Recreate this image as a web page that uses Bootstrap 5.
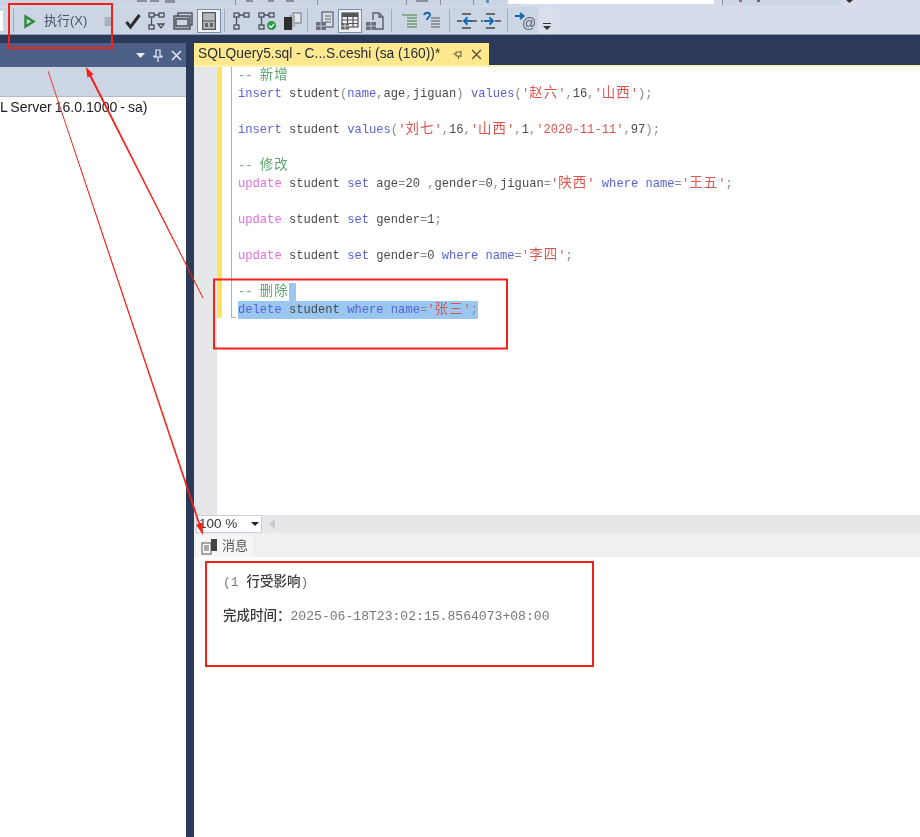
<!DOCTYPE html>
<html lang="zh">
<head>
<meta charset="utf-8">
<title>SSMS</title>
<link href="https://cdn.jsdelivr.net/npm/bootstrap@5.3.0/dist/css/bootstrap.min.css" rel="stylesheet">
<style>
html,body{margin:0;height:837px;overflow:hidden;background:#fff}
.ssms-root{position:relative;width:920px;height:837px;overflow:hidden;font-family:"Liberation Sans","Noto Sans CJK SC",sans-serif;color:#222;filter:blur(.5px)}
.top-strip{height:35px;background:#d6dce9;border-bottom:1px solid #8f9ab0}
.tool-upper{display:block;width:920px;height:7px}
.tool-row{height:27px;width:553px;background:linear-gradient(90deg,#ccd5e4 538px,#d9dfeb 538px)}
.combo-end{width:3px;height:20px;background:#fff;flex:none}
.tool-sep{width:1px;height:23px;background:#a4adbd;flex:none}
.tool-ico{width:22px;height:22px;flex:none}
.tool-on{background:#eff2f7;outline:1px solid #7f8ea8;outline-offset:-1px;width:24px;height:24px;display:flex;align-items:center;justify-content:center;flex:none}
.run-label{font-size:13px;color:#46536a;width:54px;margin-left:6px;white-space:nowrap;flex:none}
.play-ico{width:16px;height:22px;margin-left:8px;flex:none}
.grip{width:13px;height:27px;margin-left:4px;flex:none}
.s2{margin-left:2px}.s3{margin-left:3px}.s4{margin-left:4px}.s5{margin-left:5px}.s6{margin-left:6px}.s7{margin-left:7px}.s10{margin-left:10px}.s13{margin-left:13px}
.work{height:802px;background:#2a3a58}
.left-pane{width:186px;margin-top:8px;background:#fff}
.pane-title{height:24px;background:#4d6088}
.pane-strip{height:30px;background:#ccd5e3;border-bottom:1px solid #b3bccb}
.tree-line{font-size:14.1px;word-spacing:-1px;line-height:21px;white-space:nowrap;color:#222}
.pane-gap{width:8px}
.right-pane{width:726px}
.tab-row{height:30px;padding-top:8px}
.doc-tab{width:295px;height:22px;background:#ffe88e;color:#1f2a3a;font-size:13.8px;line-height:22px;padding-left:4px;white-space:nowrap}
.tab-rule{height:2px;background:#fff2b0}
.editor{height:448px;background:#fff}
.gutter{width:23px;background:#e6e7e9}
.change-bar{width:5px;background:#ffe35c;height:251px}
.collapse-col{margin-left:9px;width:5px;height:251px;border-left:1px solid #b0b0b0;border-bottom:1px solid #b0b0b0;margin-right:2px}
.code{font-family:"Liberation Mono","Noto Sans CJK SC",monospace;font-size:12.13px;line-height:18px;color:#4a4a4a;white-space:pre;flex:1}
.code b{font-weight:400;font-family:"Noto Sans CJK SC",sans-serif;font-size:13.4px;letter-spacing:1.1px;line-height:0}
.code-line{height:18px}
.k{color:#5a62d8}.p{color:#df6fdc}.s{color:#d9564f}.c{color:#5da56c}.g{color:#8a8a8a}
.sel{background:#99c7f0;display:inline-block;height:18px;vertical-align:top}
.hscroll{height:18px;background:#e6e7e9;padding-left:2px}
.zoom-box{width:66px;height:18px;background:#fff;border:1px solid #c5cfdd;font-size:13.5px;line-height:16px;padding-left:2px;color:#333}
.zoom-caret{border-left:4px solid transparent;border-right:4px solid transparent;border-top:4px solid #222;margin-right:2px}
.scroll-left{border-top:5px solid transparent;border-bottom:5px solid transparent;border-right:6px solid #c6c9cf;margin-left:7px}
.msg-tabs{height:24px;background:#eef0f2;padding:2px 0 0 2px}
.msg-tab{width:57px;height:22px;background:#f6f6f7;font-size:13px;color:#555;gap:4px;padding-left:5px}
.results{height:280px;background:#fff;font-family:"Liberation Mono","Noto Sans CJK SC",monospace;padding:17px 0 0 29px;font-size:13.08px;color:#777}
.results b{font-weight:500;font-family:"Noto Sans CJK SC",sans-serif;font-size:13.5px;color:#3a3a3a;line-height:0}
.res-line{height:17px;line-height:17px;white-space:pre}
.overlay{position:absolute;left:0;top:0;width:920px;height:837px;pointer-events:none}
</style>
</head>
<body>
<div class="ssms-root">
  <div class="top-strip">
    <svg class="tool-upper" viewBox="0 0 920 7">
      <rect x="0" y="0" width="520" height="6" fill="#ccd5e4"/>
      <g fill="#8c93a0"><rect x="235" y="0" width="1" height="5"/><rect x="317" y="0" width="1" height="5"/><rect x="406" y="0" width="1" height="5"/><rect x="440" y="0" width="1" height="5"/><rect x="473" y="0" width="1" height="5"/><rect x="722" y="0" width="1" height="5"/></g>
      <g fill="#8a8f9a"><rect x="137" y="0" width="10" height="2"/><rect x="150" y="0" width="9" height="2"/><rect x="165" y="0" width="10" height="3"/><rect x="246" y="0" width="7" height="2"/><rect x="268" y="0" width="6" height="2"/><rect x="286" y="0" width="8" height="2"/><rect x="416" y="0" width="12" height="2"/></g>
      <rect x="486" y="0" width="3" height="3" fill="#5a8fc4"/>
      <rect x="508" y="0" width="206" height="4" fill="#fff"/>
      <rect x="723" y="0" width="119" height="6" fill="#cdd6e4"/>
      <rect x="739" y="0" width="3" height="2" fill="#a05aa0"/><rect x="757" y="0" width="3" height="2" fill="#666"/>
      <path d="M846 0h7l-3.500 3z" fill="#333"/>
    </svg>
    <div class="tool-row d-flex align-items-center">
      <span class="combo-end"></span>
      <span class="tool-sep s10"></span>
      <svg class="play-ico" viewBox="0 0 16 22"><path d="M3.500 6.500v10l8-5z" fill="none" stroke="#2f8a3c" stroke-width="2.400"/></svg>
      <span class="run-label">执行(X)</span>
      <svg class="tool-ico" viewBox="0 0 22 22"><rect x="6.500" y="7" width="8" height="9" fill="#a9b1c0"/></svg>
      <svg class="tool-ico s2" viewBox="0 0 22 22"><path d="M4.500 12l4 5 9-12" fill="none" stroke="#2c2c2c" stroke-width="3"/></svg>
      <svg class="tool-ico s2" viewBox="0 0 22 22"><g fill="none" stroke="#4a4f58" stroke-width="1.300"><rect x="3" y="3" width="5" height="4"/><rect x="13" y="3" width="5" height="4"/><rect x="3" y="15" width="5" height="4"/><path d="M8 5h5M5.500 7v8"/><path d="M12 14h6l-3 4z"/></g></svg>
      <svg class="tool-ico s4" viewBox="0 0 22 22"><g fill="none" stroke="#4a4f58" stroke-width="1.400"><rect x="6" y="3" width="14" height="12"/><rect x="2" y="6" width="16" height="13" fill="#aab0ba"/><rect x="4" y="9" width="12" height="7" fill="#ccd5e4"/></g></svg>
      <span class="tool-on s3"><svg width="14" height="18" viewBox="0 0 14 18"><rect x=".6" y=".6" width="12.800" height="16.800" fill="#b4b7bd" stroke="#555" stroke-width="1.200"/><path d="M1 9h12" stroke="#555"/><rect x="3" y="11" width="3" height="4" fill="#666"/><rect x="8" y="11" width="3" height="4" fill="#666"/></svg></span>
      <span class="tool-sep s3"></span>
      <svg class="tool-ico s6" viewBox="0 0 22 22"><g fill="none" stroke="#4a4f58" stroke-width="1.300"><rect x="3" y="3" width="5" height="4"/><rect x="13" y="3" width="5" height="4"/><rect x="3" y="15" width="5" height="4"/><path d="M8 5h5M5.500 7v8"/></g></svg>
      <svg class="tool-ico s3" viewBox="0 0 22 22"><g fill="none" stroke="#4a4f58" stroke-width="1.300"><rect x="3" y="3" width="5" height="4"/><rect x="13" y="3" width="5" height="4"/><rect x="3" y="15" width="5" height="4"/><path d="M8 5h5M5.500 7v8"/></g><circle cx="15.500" cy="15.500" r="4.500" fill="#2a9a48"/><path d="M13 15.500l2 2 3-3.500" fill="none" stroke="#fff" stroke-width="1.200"/></svg>
      <svg class="tool-ico s3" viewBox="0 0 22 22"><rect x="12" y="3" width="8" height="10" fill="#e4e7ed" stroke="#6e7480"/><rect x="8" y="5" width="6" height="12" fill="#aab0ba"/><rect x="3" y="7" width="8" height="13" fill="#2e2e2e"/></svg>
      <span class="tool-sep s4"></span>
      <svg class="tool-ico s6" viewBox="0 0 22 22"><g fill="none" stroke="#5a6069" stroke-width="1.200"><rect x="8" y="2" width="11" height="15" fill="#d9dde6"/><path d="M11 6h6M11 9h6M11 12h6"/></g><rect x="2" y="12" width="10" height="8" fill="#6a6f78"/><path d="M2 16h10M7 12v8" stroke="#ccd5e4" stroke-width=".8"/></svg>
      <span class="tool-on s2"><svg width="18" height="18" viewBox="0 0 18 18"><rect x="1" y="1" width="16" height="4" fill="#555"/><g fill="none" stroke="#555" stroke-width="1.200"><rect x="1" y="1" width="16" height="14"/><path d="M1 8h16M1 11.500h16M6.500 5v10M12 5v10"/></g><rect x="0" y="11" width="8" height="6.500" fill="#666"/><path d="M0 14h8M4 11v6" stroke="#eee" stroke-width=".8"/></svg></span>
      <svg class="tool-ico s2" viewBox="0 0 22 22"><g fill="none" stroke="#5a6069" stroke-width="1.400"><path d="M9 10V3h6l4 4v12h-7"/><path d="M15 3v4h4"/></g><rect x="2" y="12" width="10" height="8" fill="#6a6f78"/><path d="M2 16h10M7 12v8" stroke="#ccd5e4" stroke-width=".8"/></svg>
      <span class="tool-sep s5"></span>
      <svg class="tool-ico s7" viewBox="0 0 22 22"><path d="M3 5h15M8 8h10M8 11h10M8 14h10M8 17h10" stroke="#6f9a6c" stroke-width="1.500"/></svg>
      <svg class="tool-ico" viewBox="0 0 22 22"><path d="M10 8h9M10 11h9M10 14h9M10 17h9" stroke="#7c7f86" stroke-width="1.500"/><path d="M3 5c1-3 6-3 6 0 0 2-3 2-3 5" fill="none" stroke="#1269b0" stroke-width="1.900"/></svg>
      <span class="tool-sep s6"></span>
      <svg class="tool-ico s6" viewBox="0 0 22 22"><path d="M1 11h5M16 11h5M6 4h9M6 18h9" stroke="#444" stroke-width="1.500"/><path d="M16 11H8m3.500-3.500L8 11l3.500 3.500" fill="none" stroke="#1269b0" stroke-width="2"/></svg>
      <svg class="tool-ico s2" viewBox="0 0 22 22"><path d="M1 11h2M15 11h6M6 4h9M6 18h9" stroke="#444" stroke-width="1.500"/><path d="M4 11h9m-3.500-3.500L13 11l-3.500 3.500" fill="none" stroke="#1269b0" stroke-width="2"/></svg>
      <span class="tool-sep s5"></span>
      <svg class="tool-ico s6" viewBox="0 0 22 22"><path d="M1 6h8M6 3l3.500 3L6 9" fill="none" stroke="#1269b0" stroke-width="2"/><text x="8" y="18" font-family="Liberation Sans" font-size="14" fill="#5a5f68">@</text></svg>
      <span class="grip d-flex flex-column justify-content-end align-items-center pb-1"><svg width="8" height="7" viewBox="0 0 8 7"><path d="M0 0h8v1H0zM0 3h8L4 7z" fill="#333"/></svg></span>
    </div>
  </div>
  <div class="work d-flex">
    <div class="left-pane">
      <div class="pane-title d-flex align-items-center justify-content-end gap-2 pe-1">
        <svg width="9" height="5" viewBox="0 0 9 5"><path d="M0 0h9L4.500 5z" fill="#e8ecf4"/></svg>
        <svg width="10" height="13" viewBox="0 0 10 13"><path d="M3 1h4v6h2v1H1V7h2zM5 8v5" fill="none" stroke="#e8ecf4" stroke-width="1.200"/></svg>
        <svg width="11" height="11" viewBox="0 0 11 11"><path d="M1 1l9 9M10 1l-9 9" stroke="#e8ecf4" stroke-width="1.500"/></svg>
      </div>
      <div class="pane-strip"></div>
      <div class="tree-line">L Server 16.0.1000 - sa)</div>
    </div>
    <div class="pane-gap"></div>
    <div class="right-pane">
      <div class="tab-row">
        <div class="doc-tab d-flex align-items-center">
          <span>SQLQuery5.sql - C...S.ceshi (sa (160))*</span>
          <svg class="s13" width="11" height="9" viewBox="0 0 11 9"><path d="M3 2h5v4H3zM0 4h3M5.500 6v3M8 1v6" fill="none" stroke="#6c6440" stroke-width="1.100"/></svg>
          <svg class="s7" width="11" height="11" viewBox="0 0 10 10"><path d="M1 1l8 8M9 1l-8 8" stroke="#5c5538" stroke-width="1.300"/></svg>
        </div>
      </div>
      <div class="tab-rule"></div>
      <div class="editor d-flex">
        <div class="gutter"></div>
        <div class="change-bar"></div>
        <div class="collapse-col"></div>
        <div class="code"><div class="code-line"><span class="c">-- <b>新增</b></span></div><div class="code-line"><span class="k">insert</span> student<span class="g">(</span><span class="k">name</span><span class="g">,</span>age<span class="g">,</span>jiguan<span class="g">)</span> <span class="k">values</span><span class="g">(</span><span class="s">'<b>赵六</b>'</span><span class="g">,</span>16<span class="g">,</span><span class="s">'<b>山西</b>'</span><span class="g">);</span></div><div class="code-line"></div><div class="code-line"><span class="k">insert</span> student <span class="k">values</span><span class="g">(</span><span class="s">'<b>刘七</b>'</span><span class="g">,</span>16<span class="g">,</span><span class="s">'<b>山西</b>'</span><span class="g">,</span>1<span class="g">,</span><span class="s">'2020-11-11'</span><span class="g">,</span>97<span class="g">);</span></div><div class="code-line"></div><div class="code-line"><span class="c">-- <b>修改</b></span></div><div class="code-line"><span class="p">update</span> student <span class="k">set</span> age<span class="g">=</span>20 <span class="g">,</span>gender<span class="g">=</span>0<span class="g">,</span>jiguan<span class="g">=</span><span class="s">'<b>陕西</b>'</span> <span class="k">where</span> <span class="k">name</span><span class="g">=</span><span class="s">'<b>王五</b>'</span><span class="g">;</span></div><div class="code-line"></div><div class="code-line"><span class="p">update</span> student <span class="k">set</span> gender<span class="g">=</span>1<span class="g">;</span></div><div class="code-line"></div><div class="code-line"><span class="p">update</span> student <span class="k">set</span> gender<span class="g">=</span>0 <span class="k">where</span> <span class="k">name</span><span class="g">=</span><span class="s">'<b>李四</b>'</span><span class="g">;</span></div><div class="code-line"></div><div class="code-line"><span class="c">-- <b>删除</b></span><span class="sel"> </span></div><div class="code-line"><span class="sel"><span class="k">delete</span> student <span class="k">where</span> <span class="k">name</span><span class="g">=</span><span class="s">'<b>张三</b>'</span><span class="g">;</span></span></div></div>
      </div>
      <div class="hscroll d-flex align-items-center">
        <div class="zoom-box d-flex align-items-center justify-content-between"><span>100 %</span><span class="zoom-caret"></span></div>
        <span class="scroll-left"></span>
      </div>
      <div class="msg-tabs">
        <div class="msg-tab d-flex align-items-center">
          <svg width="17" height="17" viewBox="0 0 17 17"><rect x="1" y="5" width="9" height="11" fill="#fff" stroke="#555"/><path d="M3 8h5M3 10h5M3 12h5" stroke="#555"/><rect x="10" y="1" width="6" height="12" fill="#444"/></svg>
          <span>消息</span>
        </div>
      </div>
      <div class="results">
        <div class="res-line">(1 <b>行受影响</b>)</div>
        <div class="res-line"></div>
        <div class="res-line"><b>完成时间：</b>2025-06-18T23:02:15.8564073+08:00</div>
      </div>
    </div>
  </div>
  <svg class="overlay" viewBox="0 0 920 837">
    <g fill="none" stroke="#f5201a" stroke-width="2">
      <rect x="9" y="4" width="103" height="44"/>
      <rect x="214" y="279.500" width="293" height="69"/>
      <rect x="206" y="562" width="387" height="104"/>
    </g>
    <path d="M203.400 297.800L91.400 75.600L93.600 74.400L86 67L87.400 77.600L89.600 76.400L202.600 298.200z" fill="#f5201a"/>
    <path d="M48.400 70.900L200 523.300L202.500 522.500L203 535L195.900 524.700L198.400 523.900L47.600 71.100z" fill="#f5201a"/>
  </svg>
</div>
<script src="https://cdn.jsdelivr.net/npm/bootstrap@5.3.0/dist/js/bootstrap.bundle.min.js"></script>
</body>
</html>
